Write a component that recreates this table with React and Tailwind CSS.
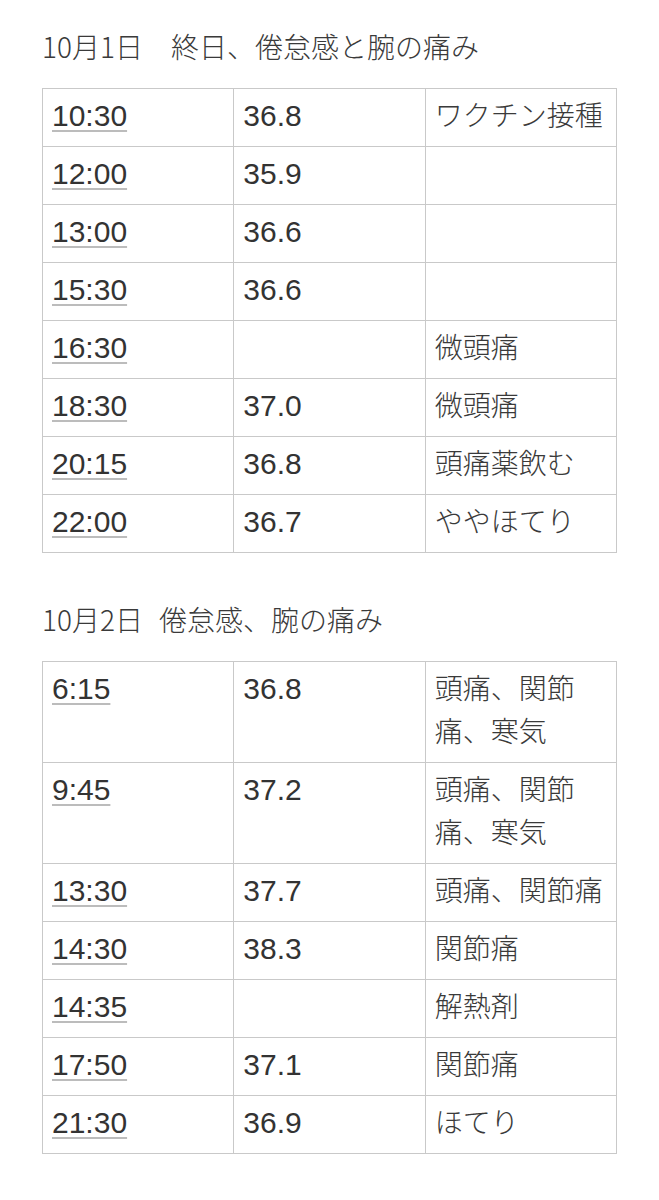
import React from 'react'

const day1 = [
    ['10:30', '36.8', 'ワクチン接種'],
    ['12:00', '35.9', ''],
    ['13:00', '36.6', ''],
    ['15:30', '36.6', ''],
    ['16:30', '', '微頭痛'],
    ['18:30', '37.0', '微頭痛'],
    ['20:15', '36.8', '頭痛薬飲む'],
    ['22:00', '36.7', 'ややほてり'],
]

const day2 = [
    ['6:15', '36.8', '頭痛、関節痛、寒気'],
    ['9:45', '37.2', '頭痛、関節痛、寒気'],
    ['13:30', '37.7', '頭痛、関節痛'],
    ['14:30', '38.3', '関節痛'],
    ['14:35', '', '解熱剤'],
    ['17:50', '37.1', '関節痛'],
    ['21:30', '36.9', 'ほてり'],
]

const LogTable = ({ rows }) => (
    <table className="w-full table-fixed border-collapse text-[#333333] font-['Liberation_Sans','Noto_Sans_CJK_JP',sans-serif]">
        <tbody>
            {rows.map(([time, temp, note]) => (
                <tr key={time}>
                    <td className="border border-[#c9c9c9] px-[9px] pt-[5px] pb-[9px] align-top text-[30px] leading-[43px]">
                        <span className="underline decoration-[#bcbcbc] decoration-[1.5px] underline-offset-[4px]">{time}</span>
                    </td>
                    <td className="border border-[#c9c9c9] px-[9px] pt-[5px] pb-[9px] align-top text-[30px] leading-[43px]">{temp}</td>
                    <td className="border border-[#c9c9c9] px-[9px] pt-[6px] pb-[8px] align-top text-[28px] leading-[43px] font-light text-[#3a3a3a]">{note}</td>
                </tr>
            ))}
        </tbody>
    </table>
)

export default function App() {
    return (
        <div className="min-h-[1200px] bg-white px-[42px] pt-[25px] text-[#3a3a3a]">
            <h2 className="mb-[21px] text-[28px] leading-[42px] font-light font-['Noto_Sans_CJK_JP',sans-serif]">
                10月1日　終日、倦怠感と腕の痛み
            </h2>
            <LogTable rows={day1} />

            <h2 className="mt-[45px] mb-[21px] text-[28px] leading-[42px] font-light font-['Noto_Sans_CJK_JP',sans-serif]">
                10月2日<span className="inline-block w-[16px]"></span>倦怠感、腕の痛み
            </h2>
            <LogTable rows={day2} />
        </div>
    )
}
